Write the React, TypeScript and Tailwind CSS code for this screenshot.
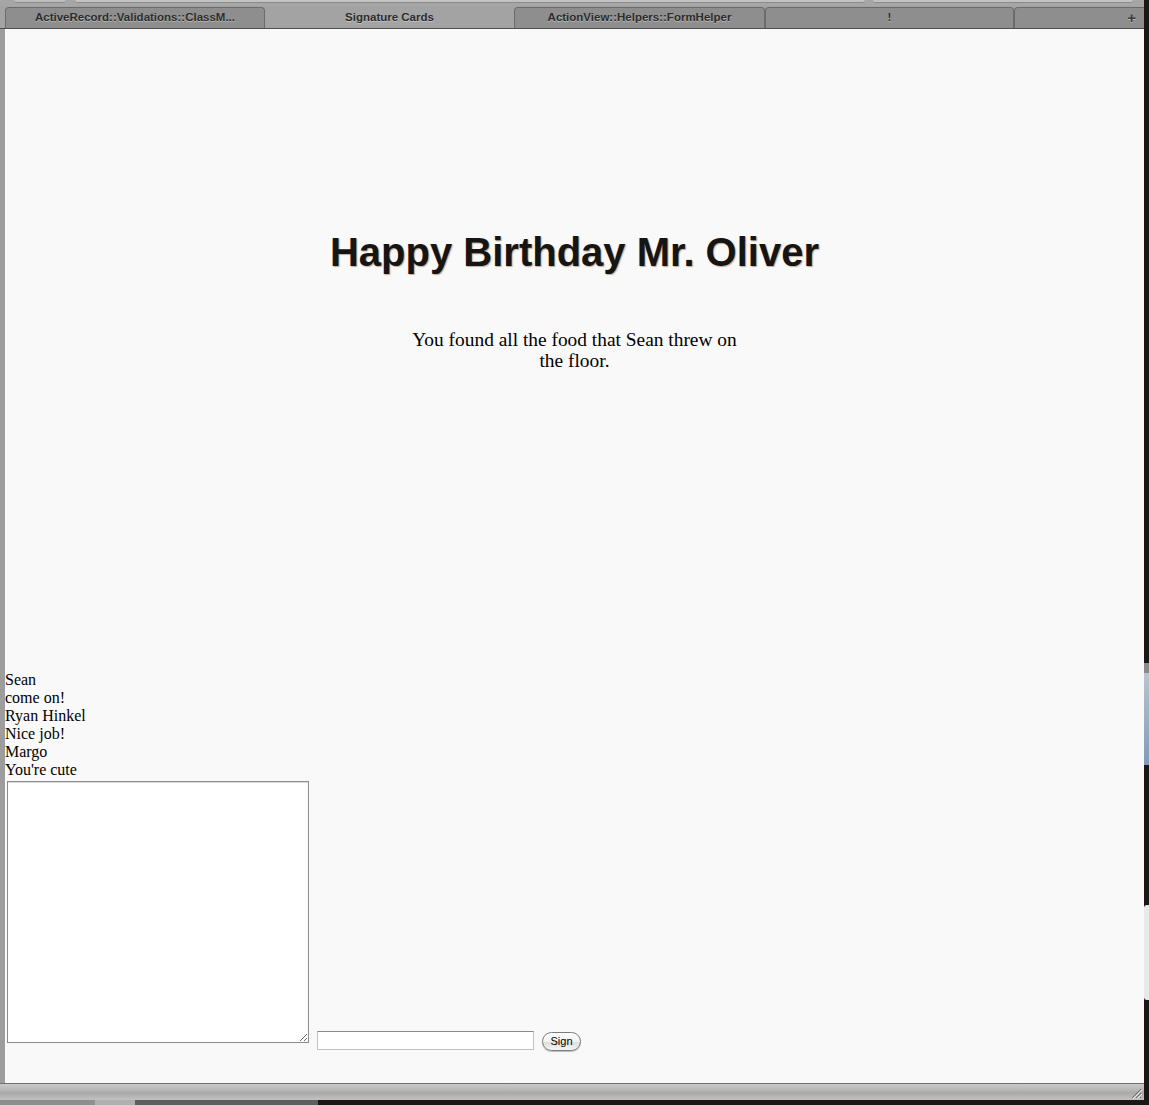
import React from 'react';

const tabs = [
  { label: 'ActiveRecord::Validations::ClassM...', w: 'w-[260px]', active: false },
  { label: 'Signature Cards', w: 'w-[249px]', active: true },
  { label: 'ActionView::Helpers::FormHelper', w: 'w-[251px]', active: false },
  { label: '!', w: 'w-[249px]', active: false },
];

const signatures = ['Sean', 'come on!', 'Ryan Hinkel', 'Nice job!', 'Margo', "You're cute"];

function TabBar() {
  return (
    <div className="flex flex-col shrink-0">
      {/* toolbar remnants above the tabs */}
      <div className="h-[6px] bg-[#a6a6a6] flex">
        <div className="w-[14px]" />
        <div className="w-[52px] h-[3px] bg-[#bdbdbd] rounded-b-[3px] border-b border-[#8a8a8a]" />
        <div className="w-[9px]" />
        <div className="w-[790px] h-[3px] bg-[#c2c2c2] rounded-b-[3px] border-b border-[#8a8a8a]" />
        <div className="w-[8px]" />
        <div className="w-[260px] h-[3px] bg-[#c2c2c2] rounded-b-[3px] border-b border-[#8a8a8a]" />
      </div>
      <div className="h-[23px] flex items-stretch bg-[#a3a3a3] border-b border-[#4f4f4f] pl-[5px] font-['Liberation_Sans',Arial,sans-serif] text-[11.5px] font-bold text-[#2c2c2c] [text-shadow:0_1px_0_rgba(255,255,255,0.35)]">
        {tabs.map((t) => (
          <div
            key={t.label}
            className={
              t.active
                ? `${t.w} flex items-center justify-center bg-[#a3a3a3] pt-[2px]`
                : `${t.w} flex items-center justify-center bg-[#8e8e8e] border border-b-0 border-[#6b6b6b] rounded-t-[4px] mt-[1px]`
            }
          >
            {t.label}
          </div>
        ))}
        <div className="flex-1 flex items-center justify-end pr-[8px] bg-[#8e8e8e] border border-b-0 border-r-0 border-[#6b6b6b] rounded-tl-[4px] mt-[1px] text-[15px] text-[#3a3a3a]">
          +
        </div>
      </div>
    </div>
  );
}

function StatusBar() {
  return (
    <div className="h-[17px] shrink-0 border-t border-[#6f6f6f] bg-[linear-gradient(180deg,#c9c9c9_0%,#b3b3b3_45%,#a9a9a9_55%,#c2c2c2_100%)] flex justify-end items-end pr-[2px] pb-[1px]">
      <svg width="12" height="12" viewBox="0 0 12 12">
        <path d="M11 2 L2 11 M11 6 L6 11 M11 10 L10 11" stroke="#6a6a6a" strokeWidth="1" />
        <path d="M12 3 L3 12 M12 7 L7 12" stroke="#e8e8e8" strokeWidth="1" />
      </svg>
    </div>
  );
}

function Card() {
  return (
    <div className="flex-1 flex flex-col bg-[#f9f9f9]">
      <h1 className="mt-[201px] text-center font-['Liberation_Sans',Arial,sans-serif] text-[40px] leading-[45px] font-bold text-[#151515] [text-shadow:1px_1px_1px_rgba(140,95,55,0.5)]">
        Happy Birthday Mr. Oliver
      </h1>
      <p className="mt-[54px] mx-auto w-[340px] text-center font-['Liberation_Serif','Times_New_Roman',serif] text-[19.4px] leading-[21px] text-black">
        You found all the food that Sean threw on the floor.
      </p>
      <div className="mt-[300px] font-['Liberation_Serif','Times_New_Roman',serif] text-[16px] leading-[18px] text-black">
        {signatures.map((s, i) => (
          <div key={i}>{s}</div>
        ))}
      </div>
      <form className="flex items-end" onSubmit={(e) => e.preventDefault()}>
        <textarea className="ml-[2px] mt-[2px] mb-[8px] w-[302px] h-[262px] bg-white border border-[#8c8c8c] shadow-[inset_0_1px_1px_rgba(0,0,0,0.15)] outline-none" />
        <input
          type="text"
          className="ml-[8px] mb-[1px] w-[217px] h-[19px] bg-white border border-[#c2c2c2] border-t-[#8a8a8a] outline-none"
        />
        <button
          type="submit"
          className="ml-[8px] w-[39px] h-[19px] rounded-full border border-[#7c7c7c] bg-[linear-gradient(180deg,#ffffff_0%,#f1f1f1_50%,#dcdcdc_51%,#f4f4f4_100%)] shadow-[0_1px_1px_rgba(0,0,0,0.25)] font-['Liberation_Sans',Arial,sans-serif] text-[11px] leading-[17px] text-black"
        >
          Sign
        </button>
      </form>
    </div>
  );
}

export default function App() {
  return (
    <div className="w-[1149px] h-[1105px] bg-[#1c1716] flex flex-col overflow-hidden">
      <div className="h-[1100px] flex">
        <div className="w-[1144px] flex flex-col bg-[#9d9d9d]">
          <TabBar />
          <div className="flex-1 flex pl-[5px]">
            <Card />
          </div>
          <StatusBar />
        </div>
        {/* desktop behind the window */}
        <div className="flex-1 flex flex-col">
          <div className="h-[663px]" />
          <div className="h-[10px] bg-[#8a8a8a]" />
          <div className="h-[92px] bg-[linear-gradient(180deg,#b9c6cc,#7f9ab8)]" />
          <div className="h-[140px]" />
          <div className="h-[95px] bg-[#e9e9e9] rounded-l-[3px]" />
        </div>
      </div>
      <div className="h-[5px] flex">
        <div className="w-[95px] bg-[#8e8e8e]" />
        <div className="w-[40px] bg-[#b0b0b0]" />
        <div className="w-[183px] bg-[#5e5e5e]" />
        <div className="flex-1" />
      </div>
    </div>
  );
}
